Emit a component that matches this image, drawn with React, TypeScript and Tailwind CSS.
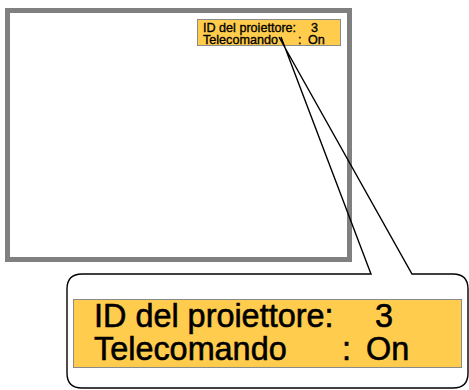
const font = { fontFamily: '"Liberation Sans", Arial, sans-serif' }

const SmallPanel = () => {
    return (
        <div
            className="absolute left-[197px] top-[19px] w-[144px] h-[27px] bg-[#ffcc4d] border border-[#8a8a8a] pl-[5px] pt-[2px] text-[12.6px] leading-[12px] text-black [-webkit-text-stroke:0.35px_black]"
            style={font}
        >
            <div className="flex h-[12px] whitespace-pre">
                <span className="w-[108px]">ID del proiettore:</span>
                <span>3</span>
            </div>
            <div className="flex h-[12px] whitespace-pre">
                <span className="w-[95px]">Telecomando</span>
                <span className="w-[10px]">:</span>
                <span>On</span>
            </div>
        </div>
    )
}

const BigPanel = () => {
    return (
        <div
            className="absolute left-[73px] top-[299px] w-[389px] h-[69px] bg-[#ffcc4d] border border-[#8a8a8a] pl-[20px] text-[32.4px] leading-[33px] text-black [-webkit-text-stroke:0.6px_black]"
            style={font}
        >
            <div className="flex whitespace-pre">
                <span className="w-[281px]">ID del proiettore:</span>
                <span>3</span>
            </div>
            <div className="flex whitespace-pre">
                <span className="w-[248px]">Telecomando</span>
                <span className="w-[24px]">:</span>
                <span>On</span>
            </div>
        </div>
    )
}

export default function App() {
    return (
        <div className="relative w-[469px] h-[390px] bg-white overflow-hidden">
            {/* screen frame */}
            <div className="absolute left-[5px] top-[8px] w-[347px] h-[254px] border-[5px] border-[#808080] bg-white" />

            <SmallPanel />

            {/* callout lines + bubble */}
            <svg className="absolute left-0 top-0" width="469" height="390" viewBox="0 0 469 390">
                <path
                    d="M 281 37 L 371 274 L 82 274 Q 67 274 67 289 L 67 373 Q 67 388 82 388 L 453 388 Q 468 388 468 373 L 468 289 Q 468 274 453 274 L 412 274 L 279 37"
                    fill="none"
                    stroke="#000"
                    strokeWidth="1.4"
                    strokeLinejoin="miter"
                />
            </svg>

            <BigPanel />
        </div>
    )
}
